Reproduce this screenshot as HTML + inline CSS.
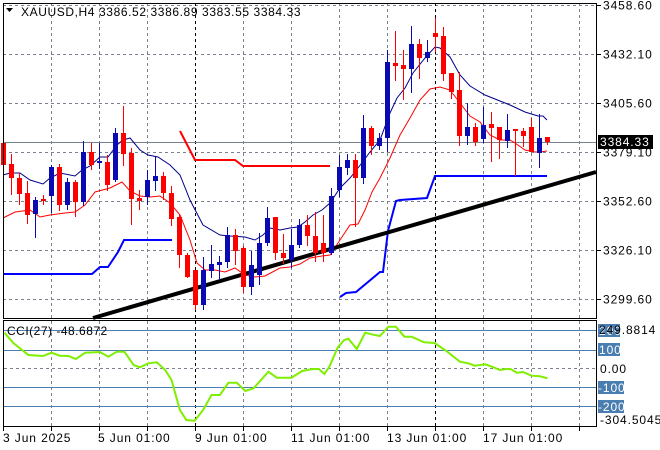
<!DOCTYPE html>
<html><head><meta charset="utf-8"><style>
html,body{margin:0;padding:0;background:#fff;}
body{width:660px;height:450px;overflow:hidden;position:relative;font-family:"Liberation Sans",sans-serif;}
svg{position:absolute;left:0;top:0;}
text{font-family:"Liberation Sans",sans-serif;font-size:12px;letter-spacing:0.9px;fill:#000;}
</style></head><body>
<svg id="s" width="660" height="450" viewBox="0 0 660 450">
<g id="grid" stroke="#7a8290" stroke-width="1" stroke-dasharray="3,3" fill="none"></g>
<line x1="3" y1="142.5" x2="596" y2="142.5" stroke="#7a8290" stroke-width="1"/>
<g id="ind" fill="none"></g>
<g id="cand"></g>
<rect x="3.5" y="3.5" width="593" height="315" fill="none" stroke="#000"/>
<rect x="3.5" y="320.5" width="593" height="106" fill="none" stroke="#000"/>
<g id="cci" fill="none"></g>
<path d="M6 8 L13 8 L9.5 12 Z" fill="#000"/>
<text x="21" y="16" style="letter-spacing:0.6px">XAUUSD,H4  3386.52 3386.89 3383.55 3384.33</text>
<g id="plab"></g>
<rect x="598" y="135" width="55" height="14" fill="#000"/>
<text x="600" y="146" style="fill:#fff">3384.33</text>
<text x="7" y="335" style="letter-spacing:0.5px">CCI(27) -48.6872</text>
<rect x="598" y="324" width="22" height="13" fill="#4a7eb0"/>
<text x="599" y="335" style="fill:#fff">200</text>
<text x="599" y="334">249.8814</text>
<rect x="598" y="343" width="22" height="13" fill="#4a7eb0"/>
<text x="599" y="354" style="fill:#fff">100</text>
<text x="600" y="373">0.00</text>
<rect x="598" y="381" width="26" height="13" fill="#4a7eb0"/>
<text x="598" y="392" style="fill:#fff">-100</text>
<rect x="598" y="400" width="26" height="13" fill="#4a7eb0"/>
<text x="598" y="411" style="fill:#fff">-200</text>
<text x="600" y="424">-304.5045</text>
<text x="3" y="442">3 Jun 2025</text>
<text x="98" y="442">5 Jun 01:00</text>
<text x="195" y="442">9 Jun 01:00</text>
<text x="291" y="442">11 Jun 01:00</text>
<text x="387" y="442">13 Jun 01:00</text>
<text x="483" y="442">17 Jun 01:00</text>
</svg>
<script>
var NS="http://www.w3.org/2000/svg";
function el(p,t,a){var e=document.createElementNS(NS,t);for(var k in a)e.setAttribute(k,a[k]);document.getElementById(p).appendChild(e);return e;}
var gy=[5.5,54.5,103.5,152.5,201.5,250.5,299.5];
gy.forEach(function(y){el("grid","line",{x1:3,y1:y,x2:596,y2:y});});
for(var i=1;i<=12;i++){var x=3.5+48*i;var blk=(i==4||i==9);
 el("grid","line",{x1:x,y1:3,x2:x,y2:318,stroke:blk?"#000":"#7a8290"});
 el("grid","line",{x1:x,y1:321,x2:x,y2:426,stroke:blk?"#000":"#7a8290"});
 el("grid","line",{x1:x,y1:427,x2:x,y2:431,stroke:"#000","stroke-dasharray":"none"});}
el("grid","line",{x1:3.5,y1:427,x2:3.5,y2:431,stroke:"#000","stroke-dasharray":"none"});
var pl=["3458.60","3432.10","3405.60","3379.10","3352.60","3326.10","3299.60"];
pl.forEach(function(t,i){var y=gy[i];el("plab","line",{x1:597,y1:y,x2:601,y2:y,stroke:"#000"});var e=el("plab","text",{x:603,y:y+4});e.textContent=t;});
function pts(a){return a.map(function(p){return p[0]+","+p[1]}).join(" ");}
el("ind","polyline",{stroke:"#00008b","stroke-width":1,points:pts([[3,175],[10,173],[20,173],[30,180],[43,184],[50,178],[60,173],[75,176],[82,170],[90,166],[100,157],[108,157],[117,145],[123,140],[130,138],[140,150],[148,155],[158,157],[170,165],[180,175],[190,200],[203,225],[220,235],[230,236],[245,237],[255,240],[263,235],[270,228],[280,230],[290,228],[298,227],[305,222],[313,215],[322,210],[330,203],[340,188],[350,178],[358,168],[370,152],[380,140],[390,113],[397,98],[405,88],[413,73],[425,58],[435,47],[440,48],[450,57],[460,75],[470,86],[485,95],[500,101],[510,105],[525,112],[538,116],[543,116],[547,120]])});
el("ind","polyline",{stroke:"#ff0000","stroke-width":1,points:pts([[3,218],[15,212],[30,210],[40,217],[50,215],[65,213],[75,212],[85,205],[95,192],[110,188],[122,182],[130,191],[140,196],[150,197],[160,196],[170,203],[180,215],[190,240],[197,263],[205,270],[215,270],[225,272],[235,268],[245,275],[255,277],[265,276],[280,268],[290,267],[300,264],[310,258],[322,256],[330,255],[340,240],[350,225],[358,224],[365,210],[372,192],[380,178],[390,158],[400,135],[410,118],[420,100],[430,89],[440,87],[450,90],[460,103],[470,116],[480,122],[490,135],[500,140],[510,140],[515,143],[525,150],[535,152],[540,152],[547,151]])});
el("ind","polyline",{stroke:"#ff0000","stroke-width":2,points:pts([[180,131],[195,160],[235,160],[243,166],[330,166]])});
el("ind","polyline",{stroke:"#0000ff","stroke-width":2,points:pts([[3,274],[92,274],[100,267],[108,267],[118,252],[124,240],[172,240]])});
el("ind","polyline",{stroke:"#0000ff","stroke-width":2,points:pts([[340,297],[346,293],[356,292],[380,272],[383,272],[388,231],[392,216],[396,201],[400,200],[427,198],[435,176],[547,176]])});
el("ind","line",{x1:93,y1:318,x2:596,y2:172,stroke:"#000","stroke-width":4});
var C=[[3,0,143,165,128,182],[11,0,164,178,154,195],[19,0,178,194,173,205],[27,0,193,215,181,224],[35,1,200,214,197,238],[43,0,199,201,195,205],[51,1,167,196,165,213],[59,0,167,205,164,211],[67,1,182,205,178,210],[75,0,182,202,180,217],[83,1,152,202,141,206],[91,0,152,165,143,170],[99,1,161,163,143,169],[107,0,162,185,155,191],[115,1,133,180,128,182],[123,0,133,154,106,166],[131,0,153,199,148,225],[139,0,198,201,190,210],[147,1,180,197,170,205],[155,1,176,181,157,191],[163,0,176,193,172,200],[171,0,193,219,186,226],[179,0,217,255,215,268],[187,0,255,277,253,278],[195,0,270,305,270,310],[203,1,270,305,257,310],[211,1,264,271,245,278],[219,1,262,265,256,280],[227,1,235,262,227,268],[235,0,235,251,229,265],[243,0,248,287,246,293],[251,1,265,287,251,295],[259,1,243,275,233,285],[267,1,218,243,207,246],[275,0,217,253,217,260],[283,0,253,258,234,264],[291,1,245,260,229,268],[299,1,225,245,219,248],[307,0,225,236,215,246],[315,0,236,253,212,262],[323,0,243,253,215,262],[331,1,196,253,188,255],[339,1,167,190,155,197],[347,1,160,168,154,175],[355,0,160,178,154,227],[363,1,128,178,115,184],[371,0,128,146,126,155],[379,1,138,146,133,150],[387,1,62,138,50,152],[395,0,63,66,31,81],[403,0,65,69,50,100],[411,1,44,69,26,93],[419,0,44,58,39,79],[427,1,52,58,40,62],[435,0,33,37,18,52],[443,0,36,74,27,81],[451,0,73,92,73,99],[459,0,90,136,72,146],[467,1,127,136,103,145],[475,0,127,142,123,146],[483,1,125,139,107,143],[491,0,124,128,112,162],[499,0,127,140,127,159],[507,1,130,141,114,148],[515,0,129,131,129,176],[523,0,131,136,128,147],[531,0,127,152,118,152],[539,1,138,153,114,168],[547,0,137,142,137,145]];
C.forEach(function(c){var col=c[1]?"#0a0ab4":"#ff0000";
 el("cand","line",{x1:c[0]+0.5,y1:c[4],x2:c[0]+0.5,y2:c[5],stroke:col});
 el("cand","rect",{x:c[0]-2,y:c[2],width:5,height:Math.max(1,c[3]-c[2]),fill:col});});
[330.5,350.5,387.5,406.5].forEach(function(y){el("cci","line",{x1:4,y1:y,x2:596,y2:y,stroke:"#4a7eb0"});});
el("cci","line",{x1:4,y1:368.5,x2:596,y2:368.5,stroke:"#7a8290","stroke-dasharray":"3,3"});
var Z=[[8,68],[30,100],[65,135],[100,138],[120,128],[140,137],[160,138],[178,147],[200,128],[235,126],[255,140],[275,125],[293,125],[315,165],[330,172],[350,160],[370,157],[390,180],[405,210],[425,300],[440,330],[460,332],[480,300],[500,255],[520,255],[540,218],[560,218],[580,243],[600,235],[635,185],[655,203],[690,203],[715,183],[740,177],[755,177],[768,192],[780,170],[800,112],[815,90],[825,86],[845,117],[865,68],[880,73],[900,78],[920,50],[938,50],[958,80],[975,80],[1005,97],[1030,99],[1060,125],[1090,155],[1110,160],[1125,167],[1150,163],[1170,172],[1185,180],[1200,177],[1210,177],[1225,188],[1240,186],[1260,197],[1280,199],[1298,205]];
el("cci","polyline",{stroke:"#7fef00","stroke-width":2,points:pts(Z.map(function(p){return [(p[0]/2.375+1).toFixed(1),(310+p[1]/3).toFixed(1)];}))});
</script>
</body></html>
